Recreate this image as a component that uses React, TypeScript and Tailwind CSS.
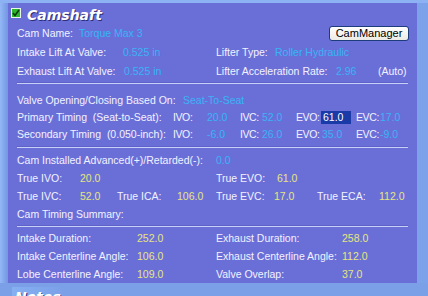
import React from "react";

const LBL = "shrink-0 text-[#f2f2ff]";
const TAG = "shrink-0 text-[#f2f2ff] tracking-[-0.4px]";
const CY = "shrink-0 text-[#38b4f6]";
const YL = "shrink-0 text-[#e6e67c]";

function Sep() {
  return (
    <div className="flex flex-col">
      <div className="h-px bg-[#5e62c8]" />
      <div className="h-px bg-[#c8d0f8]" />
    </div>
  );
}

function Check() {
  return (
    <div className="w-[10px] h-[10px] shrink-0 bg-[#2fb52f] border border-[#e8f8e8] flex items-center justify-center">
      <svg width="8" height="8" viewBox="0 0 8 8">
        <path d="M1 4 L3 6.5 L7 1" stroke="#0b3a0b" strokeWidth="1.6" fill="none" />
      </svg>
    </div>
  );
}

const title =
  "font-['DejaVu_Sans',Verdana,sans-serif] font-bold italic text-[14px] leading-none text-white [text-shadow:1px_1px_0_#2e2e78]";

export default function App() {
  return (
    <div className="w-[428px] h-[296px] overflow-hidden whitespace-nowrap bg-[#7ba0e8] font-['Liberation_Sans',Arial,sans-serif] text-[10.5px] leading-none">
      <div className="h-[3px] bg-[#8cb2f4]" />
      <div className="flex h-[280px]">
        <div className="w-[8px] h-[280px] shrink-0 bg-gradient-to-r from-[#94b8f6] to-[#7296e2]" />
        <div className="w-[409px] h-[280px] shrink-0 bg-[#6a6fd8] px-[9px] flex flex-col">
          {/* header */}
          <div className="h-[21px] shrink-0 flex items-start pt-[5px] -ml-[6px] gap-[6px]">
            <Check />
            <span className={title}>Camshaft</span>
          </div>

          {/* cam name / lift */}
          <div className="h-[19px] shrink-0 flex items-center">
            <span className={`w-[62px] ${LBL}`}>Cam Name:</span>
            <span className={`w-[250px] ${CY}`}>Torque Max 3</span>
            <button className="w-[80px] h-[15px] shrink-0 rounded-[3px] border border-[#1d3c7c] bg-gradient-to-b from-white to-[#ecebe4] text-black text-[11px] leading-none">
              CamManager
            </button>
          </div>
          <div className="h-[19px] shrink-0 flex items-center">
            <span className={`w-[106px] ${LBL}`}>Intake Lift At Valve:</span>
            <span className={`w-[93px] ${CY}`}>0.525 in</span>
            <span className={`w-[59px] ${LBL}`}>Lifter Type:</span>
            <span className={CY}>Roller Hydraulic</span>
          </div>
          <div className="h-[19px] shrink-0 flex items-center">
            <span className={`w-[107px] ${LBL}`}>Exhaust Lift At Valve:</span>
            <span className={`w-[92px] ${CY}`}>0.525 in</span>
            <span className={`w-[120px] ${LBL}`}>Lifter Acceleration Rate:</span>
            <span className={`w-[42px] ${CY}`}>2.96</span>
            <span className={LBL}>(Auto)</span>
          </div>
          <div className="mt-px shrink-0">
            <Sep />
          </div>

          {/* valve timing */}
          <div className="mt-[8px] h-[17px] shrink-0 flex items-center">
            <span className={`w-[166px] ${LBL}`}>Valve Opening/Closing Based On:</span>
            <span className={CY}>Seat-To-Seat</span>
          </div>
          <div className="h-[17px] shrink-0 flex items-center">
            <span className={`w-[156px] ${LBL}`}>Primary Timing&nbsp; (Seat-to-Seat):</span>
            <span className={`w-[34px] ${TAG}`}>IVO:</span>
            <span className={`w-[33px] ${CY}`}>20.0</span>
            <span className={`w-[22px] ${TAG}`}>IVC:</span>
            <span className={`w-[34px] ${CY}`}>52.0</span>
            <span className={`w-[25px] ${TAG}`}>EVO:</span>
            <span className="w-[30px] h-[13px] shrink-0 bg-[#1a3aa8] text-white flex items-center pl-[2px]">61.0</span>
            <span className={`ml-[5px] w-[24px] ${TAG}`}>EVC:</span>
            <span className={CY}>17.0</span>
          </div>
          <div className="h-[17px] shrink-0 flex items-center">
            <span className={`w-[156px] ${LBL}`}>Secondary Timing&nbsp; (0.050-inch):</span>
            <span className={`w-[34px] ${TAG}`}>IVO:</span>
            <span className={`w-[33px] ${CY}`}>-6.0</span>
            <span className={`w-[22px] ${TAG}`}>IVC:</span>
            <span className={`w-[34px] ${CY}`}>26.0</span>
            <span className={`w-[26px] ${TAG}`}>EVO:</span>
            <span className={`w-[34px] ${CY}`}>35.0</span>
            <span className={`w-[24px] ${TAG}`}>EVC:</span>
            <span className={CY}>-9.0</span>
          </div>
          <div className="mt-[3px] shrink-0">
            <Sep />
          </div>

          {/* installed */}
          <div className="mt-[3px] h-[18px] shrink-0 flex items-center">
            <span className={`w-[199px] ${LBL}`}>Cam Installed Advanced(+)/Retarded(-):</span>
            <span className={CY}>0.0</span>
          </div>
          <div className="h-[18px] shrink-0 flex items-center">
            <span className={`w-[63px] ${LBL}`}>True IVO:</span>
            <span className={`w-[136px] ${YL}`}>20.0</span>
            <span className={`w-[61px] ${LBL}`}>True EVO:</span>
            <span className={YL}>61.0</span>
          </div>
          <div className="h-[18px] shrink-0 flex items-center">
            <span className={`w-[63px] ${LBL}`}>True IVC:</span>
            <span className={`w-[37px] ${YL}`}>52.0</span>
            <span className={`w-[60px] ${LBL}`}>True ICA:</span>
            <span className={`w-[39px] ${YL}`}>106.0</span>
            <span className={`w-[58px] ${LBL}`}>True EVC:</span>
            <span className={`w-[43px] ${YL}`}>17.0</span>
            <span className={`w-[62px] ${LBL}`}>True ECA:</span>
            <span className={YL}>112.0</span>
          </div>
          <div className="h-[18px] shrink-0 flex items-center">
            <span className={LBL}>Cam Timing Summary:</span>
          </div>
          <div className="mt-[2px] shrink-0">
            <Sep />
          </div>

          {/* summary */}
          <div className="mt-[2px] h-[18px] shrink-0 flex items-center">
            <span className={`w-[120px] ${LBL}`}>Intake Duration:</span>
            <span className={`w-[79px] ${YL}`}>252.0</span>
            <span className={`w-[126px] ${LBL}`}>Exhaust Duration:</span>
            <span className={YL}>258.0</span>
          </div>
          <div className="h-[18px] shrink-0 flex items-center">
            <span className={`w-[120px] ${LBL}`}>Intake Centerline Angle:</span>
            <span className={`w-[79px] ${YL}`}>106.0</span>
            <span className={`w-[126px] ${LBL}`}>Exhaust Centerline Angle:</span>
            <span className={YL}>112.0</span>
          </div>
          <div className="h-[18px] shrink-0 flex items-center">
            <span className={`w-[120px] ${LBL}`}>Lobe Centerline Angle:</span>
            <span className={`w-[79px] ${YL}`}>109.0</span>
            <span className={`w-[126px] ${LBL}`}>Valve Overlap:</span>
            <span className={YL}>37.0</span>
          </div>
        </div>
        <div className="flex-1 h-[280px] bg-[#7ca2ea]" />
      </div>

      {/* next section header */}
      <div className="mt-[4px] ml-[12px] w-[52px] h-[20px] rounded-tr-[6px] bg-gradient-to-r from-[#86b0f2] to-[#7ba0e8] pl-[3px] pt-[3px]">
        <span className={title}>Notes</span>
      </div>
    </div>
  );
}
